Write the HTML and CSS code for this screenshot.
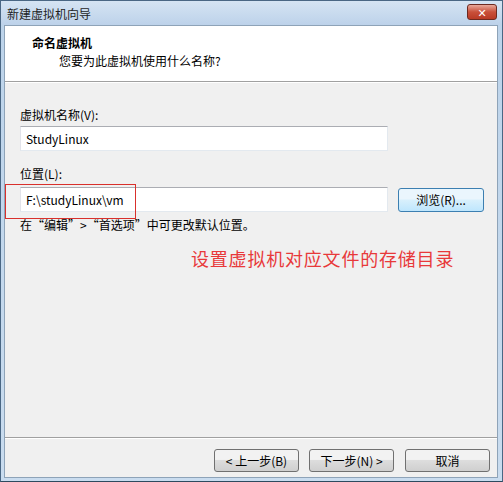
FILE: index.html
```html
<!DOCTYPE html>
<html lang="zh-CN">
<head>
    <meta charset="UTF-8">
    <title>新建虚拟机向导</title>
    <link rel="stylesheet" href="styles.css">
</head>
<body>
    <div class="window">
        <div class="titleBar">
            <span class="titleText">新建虚拟机向导</span>
            <span class="closeBtn">✕</span>
        </div>
        <div class="frame">
            <div class="header">
                <p class="hTitle">命名虚拟机</p>
                <p class="hSub">您要为此虚拟机使用什么名称?</p>
            </div>
            <div class="body">
                <p class="label lbName">虚拟机名称(V):</p>
                <div class="row">
                    <div class="input">StudyLinux</div>
                </div>
                <p class="label lbLoc">位置(L):</p>
                <div class="row">
                    <div class="input">F:\studyLinux\vm</div>
                    <div class="btn browse">浏览(R)...</div>
                    <div class="mark"></div>
                </div>
                <p class="hint">在“编辑”&gt;“首选项”中可更改默认位置。</p>
                <p class="note">设置虚拟机对应文件的存储目录</p>
            </div>
            <div class="footer">
                <div class="btn nav">&lt; 上一步(B)</div>
                <div class="btn nav">下一步(N) &gt;</div>
                <div class="btn nav cancel">取消</div>
            </div>
        </div>
    </div>
</body>
</html>
```

FILE: styles.css
```css
* {
    box-sizing: border-box;
}

html, body {
    margin: 0;
    padding: 0;
}

body {
    font-family: "Noto Sans CJK SC", "DejaVu Sans", sans-serif;
    font-size: 12px;
    color: #000;
    background: #fff;
}

p {
    margin: 0;
}

/* 창 전체 틀 */
.window {
    width: 503px;
    height: 482px;
    display: flex;
    flex-direction: column;
    background: linear-gradient(#bcd3ea, #c9dcef);
    border: 1px solid #4a6784;
    border-bottom-color: #2d4a5e;
}

.titleBar {
    height: 24px;
    display: flex;
    align-items: center;
    padding: 0 5px 0 6px;
    background: linear-gradient(#d5e4f3, #bdd2ea);
}

.titleText {
    flex: 1;
    color: #1e1e1e;
    font-size: 12px;
}

.closeBtn {
    width: 30px;
    height: 16px;
    margin-top: -3px;
    border: 1px solid #6d2a20;
    border-radius: 3px;
    background: linear-gradient(#e9a99a, #c9503a 50%, #b93a25);
    color: #fff;
    font-size: 11px;
    font-weight: bold;
    text-align: center;
    line-height: 14px;
}

.frame {
    flex: 1;
    margin: 0 4px 3px 3px;
    display: flex;
    flex-direction: column;
    border: 1px solid #8ea3b8;
    background: #f0f0f0;
}

.header {
    height: 56px;
    background: #fff;
    border-bottom: 1px solid #a0a0a0;
    padding: 8px 0 0 0;
}

.hTitle {
    font-weight: bold;
    font-size: 12px;
    margin-left: 27px;
    line-height: 18px;
}

.hSub {
    margin-left: 54px;
    line-height: 18px;
}

.body {
    flex: 1;
    position: relative;
    padding: 24px 0 0 15px;
    border-top: 1px solid #fff;
}

.label {
    line-height: 16px;
}

.lbName {
    margin-bottom: 3px;
}

.lbLoc {
    margin-top: 15px;
    margin-bottom: 5px;
}

.row {
    position: relative;
    display: flex;
    align-items: center;
}

.input {
    width: 368px;
    height: 25px;
    padding-left: 5px;
    line-height: 23px;
    background: #fff;
    border: 1px solid #e3e9ef;
    border-top-color: #abadb3;
    border-left-color: #e2e3ea;
}

.btn {
    height: 24px;
    text-align: center;
    line-height: 22px;
    border: 1px solid #707070;
    border-radius: 3px;
    background: linear-gradient(#f2f2f2 45%, #dddddd 50%, #cfcfcf);
}

.browse {
    width: 86px;
    margin-left: 10px;
    border-color: #3c7fb1;
    background: linear-gradient(#eaf6fd 45%, #d9f0fc 50%, #bee6fd);
}

/* 빨간 표시 상자 */
.mark {
    position: absolute;
    left: -15px;
    top: -3px;
    width: 131px;
    height: 35px;
    border: 1px solid #d9302c;
}

.hint {
    margin-top: 5px;
    line-height: 16px;
}

.note {
    margin: 12px 0 0 171px;
    color: #e8393a;
    font-size: 18px;
    letter-spacing: 0.8px;
}

.footer {
    height: 40px;
    display: flex;
    justify-content: flex-end;
    align-items: center;
    gap: 10px;
    padding: 0 7px 0 0;
    border-top: 1px solid #a0a0a0;
    box-shadow: inset 0 1px 0 #fff;
}

.nav {
    width: 85px;
    height: 23px;
    line-height: 21px;
    margin-top: 6px;
}

.cancel {
    margin-left: 1px;
}
```
